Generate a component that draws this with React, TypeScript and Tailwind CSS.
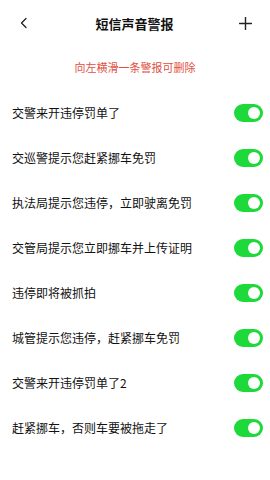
import { useState } from "react";

const ALERTS = [
  "交警来开违停罚单了",
  "交巡警提示您赶紧挪车免罚",
  "执法局提示您违停，立即驶离免罚",
  "交管局提示您立即挪车并上传证明",
  "违停即将被抓拍",
  "城管提示您违停，赶紧挪车免罚",
  "交警来开违停罚单了2",
  "赶紧挪车，否则车要被拖走了",
];

function Toggle({ on, onClick }: { on: boolean; onClick: () => void }) {
  return (
    <button
      onClick={onClick}
      className={`flex items-center w-[29px] h-[18px] rounded-full px-[3px] ${
        on ? "bg-[#1ed93a] justify-end" : "bg-[#d9d9d9] justify-start"
      }`}
      aria-pressed={on}
    >
      <span className="block w-[12px] h-[12px] rounded-full bg-white" />
    </button>
  );
}

export default function App() {
  const [states, setStates] = useState(ALERTS.map(() => true));

  return (
    <div
      className="w-[270px] h-[480px] bg-white text-[#111]"
      style={{ fontFamily: '"Noto Sans CJK SC", "Noto Sans", sans-serif' }}
    >
      {/* Header */}
      <header className="flex items-center justify-between h-[46px] px-[18px]">
        <svg width={12} height={12} viewBox="0 0 12 12" fill="none" stroke="#222" strokeWidth={1.3} strokeLinecap="round" strokeLinejoin="round">
          <path d="M8 1.5 3.5 6 8 10.5" />
        </svg>
        <h1 className="text-[13px] font-bold leading-none">短信声音警报</h1>
        <svg width={13} height={13} viewBox="0 0 13 13" fill="none" stroke="#222" strokeWidth={1.4} strokeLinecap="round">
          <path d="M6.5 0.5v12M0.5 6.5h12" />
        </svg>
      </header>

      <p className="text-center text-[11px] text-[#e0503f] mt-[16px] leading-none">向左横滑一条警报可删除</p>

      <ul className="mt-[17px]">
        {ALERTS.map((label, i) => (
          <li key={label} className="flex items-center justify-between h-[45px] pl-[12px] pr-[7px]">
            <span className="text-[12px] leading-none">{label}</span>
            <Toggle
              on={states[i]}
              onClick={() => setStates((s) => s.map((v, j) => (j === i ? !v : v)))}
            />
          </li>
        ))}
      </ul>
    </div>
  );
}
